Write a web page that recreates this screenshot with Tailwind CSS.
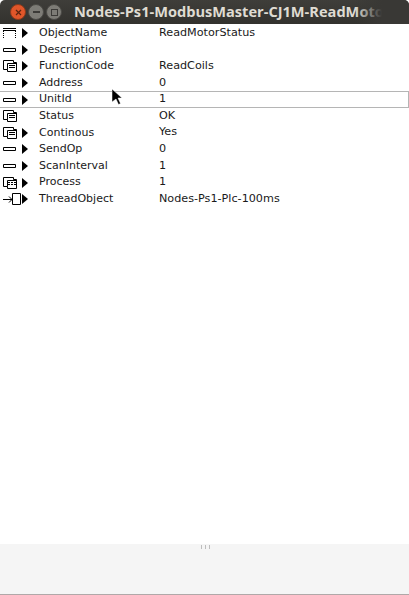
<!DOCTYPE html>
<html lang="en">
<head>
  <meta charset="UTF-8" />
  <title>Nodes-Ps1-ModbusMaster-CJ1M-ReadMotorStatus</title>
  <script src="https://cdn.jsdelivr.net/npm/@tailwindcss/browser@4"></script>
</head>
<body class="w-[409px] h-[595px] overflow-hidden bg-white flex flex-col font-['DejaVu_Sans',sans-serif] text-[11px] text-[#1a1a1a]">
  <!-- window title bar -->
  <div class="relative h-[24px] shrink-0 flex items-center bg-gradient-to-b from-[#3f3e3a] to-[#33322e] overflow-hidden rounded-t-[5px]">
    <div class="flex items-center gap-[2px] pl-[10px]">
      <span class="w-[16px] h-[16px] rounded-full bg-[#e0562a] border border-[#8a3a1c] flex items-center justify-center">
        <svg width="7" height="7" viewBox="0 0 7 7"><path d="M1 1l5 5M6 1l-5 5" stroke="#5a2410" stroke-width="1.2"/></svg>
      </span>
      <span class="w-[16px] h-[16px] rounded-full bg-[#7d7c76] border border-[#4b4a46] flex items-center justify-center">
        <span class="w-[7px] h-[2px] bg-[#3c3b38]"></span>
      </span>
      <span class="w-[16px] h-[16px] rounded-full bg-[#7d7c76] border border-[#4b4a46] flex items-center justify-center">
        <span class="w-[7px] h-[7px] border border-[#3c3b38]"></span>
      </span>
    </div>
    <span class="ml-[12px] whitespace-nowrap font-['Open_Sans',sans-serif] font-bold text-[14.6px] text-[#dfdbd2]">Nodes-Ps1-ModbusMaster-CJ1M-ReadMotor</span>
    <div class="absolute right-0 top-0 bottom-0 w-[54px] bg-gradient-to-r from-transparent to-[#393835] to-50%"></div>
  </div>

  <!-- property rows -->
  <div class="relative flex-1 flex flex-col pt-[1px]">
    <div class="flex items-center h-[16.6px]">
      <svg class="ml-[3px] w-[14px] h-[10px]" viewBox="0 0 14 10"><path d="M0 .5h13M0 2.500h13" stroke="#000"/><path d="M.5 3v7M12.500 3v7" stroke="#000" stroke-dasharray="1 1"/></svg>
      <svg class="ml-[5px] w-[6px] h-[10px]" viewBox="0 0 6 10"><path d="M0 0l6 5-6 5z" fill="#000"/></svg>
      <span class="ml-[11px] w-[120px]">ObjectName</span><span class="text-[11.2px]">ReadMotorStatus</span>
    </div>
    <div class="flex items-center h-[16.6px]">
      <svg class="ml-[3px] w-[14px] h-[10px]" viewBox="0 0 14 10"><path fill="none" stroke="#000" d="M.5 3.500h12v3H.5z"/></svg>
      <svg class="ml-[5px] w-[6px] h-[10px]" viewBox="0 0 6 10"><path d="M0 0l6 5-6 5z" fill="#000"/></svg>
      <span class="ml-[11px] w-[120px]">Description</span><span></span>
    </div>
    <div class="flex items-center h-[16.6px]">
      <svg class="ml-[3px] w-[14px] h-[12px]" viewBox="0 0 14 12"><path fill="none" stroke="#000" d="M.5.500h10v2h3v9h-9v-2h-4zM4.500 9.500v-6h9M6 5.500h6M6 7.500h6"/></svg>
      <svg class="ml-[5px] w-[6px] h-[10px]" viewBox="0 0 6 10"><path d="M0 0l6 5-6 5z" fill="#000"/></svg>
      <span class="ml-[11px] w-[120px]">FunctionCode</span><span class="text-[11.2px]">ReadCoils</span>
    </div>
    <div class="flex items-center h-[16.6px]">
      <svg class="ml-[3px] w-[14px] h-[10px]" viewBox="0 0 14 10"><path fill="none" stroke="#000" d="M.5 3.500h12v3H.5z"/></svg>
      <svg class="ml-[5px] w-[6px] h-[10px]" viewBox="0 0 6 10"><path d="M0 0l6 5-6 5z" fill="#000"/></svg>
      <span class="ml-[11px] w-[120px]">Address</span><span class="text-[11.2px]">0</span>
    </div>
    <div class="flex items-center h-[16.6px] border-y border-r border-[#b5b5b5]">
      <svg class="ml-[3px] w-[14px] h-[10px]" viewBox="0 0 14 10"><path fill="none" stroke="#000" d="M.5 3.500h12v3H.5z"/></svg>
      <svg class="ml-[5px] w-[6px] h-[10px]" viewBox="0 0 6 10"><path d="M0 0l6 5-6 5z" fill="#000"/></svg>
      <span class="ml-[11px] w-[120px]">UnitId</span><span class="text-[11.2px]">1</span>
    </div>
    <div class="flex items-center h-[16.6px]">
      <svg class="ml-[3px] w-[14px] h-[12px]" viewBox="0 0 14 12"><path fill="none" stroke="#000" d="M.5.500h10v2h3v9h-9v-2h-4zM4.500 9.500v-6h9M6 5.500h6M6 7.500h6"/></svg>
      <span class="ml-[22px] w-[120px]">Status</span><span class="text-[11.2px]">OK</span>
    </div>
    <div class="flex items-center h-[16.6px]">
      <svg class="ml-[3px] w-[14px] h-[12px]" viewBox="0 0 14 12"><path fill="none" stroke="#000" d="M.5.500h10v2h3v9h-9v-2h-4zM4.500 9.500v-6h9M6 5.500h6M6 7.500h6"/></svg>
      <svg class="ml-[5px] w-[6px] h-[10px]" viewBox="0 0 6 10"><path d="M0 0l6 5-6 5z" fill="#000"/></svg>
      <span class="ml-[11px] w-[120px]">Continous</span><span class="text-[11.2px]">Yes</span>
    </div>
    <div class="flex items-center h-[16.6px]">
      <svg class="ml-[3px] w-[14px] h-[10px]" viewBox="0 0 14 10"><path fill="none" stroke="#000" d="M.5 3.500h12v3H.5z"/></svg>
      <svg class="ml-[5px] w-[6px] h-[10px]" viewBox="0 0 6 10"><path d="M0 0l6 5-6 5z" fill="#000"/></svg>
      <span class="ml-[11px] w-[120px]">SendOp</span><span class="text-[11.2px]">0</span>
    </div>
    <div class="flex items-center h-[16.6px]">
      <svg class="ml-[3px] w-[14px] h-[10px]" viewBox="0 0 14 10"><path fill="none" stroke="#000" d="M.5 3.500h12v3H.5z"/></svg>
      <svg class="ml-[5px] w-[6px] h-[10px]" viewBox="0 0 6 10"><path d="M0 0l6 5-6 5z" fill="#000"/></svg>
      <span class="ml-[11px] w-[120px]">ScanInterval</span><span class="text-[11.2px]">1</span>
    </div>
    <div class="flex items-center h-[16.6px]">
      <svg class="ml-[3px] w-[14px] h-[12px]" viewBox="0 0 14 12"><path fill="none" stroke="#000" d="M.5.500h10v2h3v9h-9v-2h-4zM4.500 9.500v-6h9"/><path stroke="#000" d="M5 5.500h8M5 7.500h8" stroke-dasharray="2 1"/></svg>
      <svg class="ml-[5px] w-[6px] h-[10px]" viewBox="0 0 6 10"><path d="M0 0l6 5-6 5z" fill="#000"/></svg>
      <span class="ml-[11px] w-[120px]">Process</span><span class="text-[11.2px]">1</span>
    </div>
    <div class="flex items-center h-[16.6px]">
      <svg class="ml-[3px] w-[19px] h-[12px]" viewBox="0 0 19 12"><path fill="none" stroke="#000" d="M0 6.500h9M6 3.500l3 3-3 3M9.500.500h8v11h-8z"/></svg>
      <svg class="w-[6px] h-[10px]" viewBox="0 0 6 10"><path d="M0 0l6 5-6 5z" fill="#000"/></svg>
      <span class="ml-[11px] w-[120px]">ThreadObject</span><span class="text-[11.2px]">Nodes-Ps1-Plc-100ms</span>
    </div>
    <!-- mouse cursor -->
    <svg class="absolute left-[112px] top-[65px] w-[11px] h-[16px]" viewBox="0 0 11 16"><path d="M0 0l10 9H6l2.500 5.500-2 1L4 10l-4 3z" fill="#000" stroke="#fff" stroke-width=".5"/></svg>
  </div>

  <!-- bottom panel with splitter grip -->
  <div class="h-[51px] shrink-0 flex justify-center gap-[3px] pt-[1px] pl-[1px] bg-[#f5f5f5] border-b border-[#b0a8a8]">
    <span class="w-[1px] h-[4px] bg-[#bdbdbd]"></span>
    <span class="w-[1px] h-[4px] bg-[#bdbdbd]"></span>
    <span class="w-[1px] h-[4px] bg-[#bdbdbd]"></span>
  </div>
</body>
</html>
